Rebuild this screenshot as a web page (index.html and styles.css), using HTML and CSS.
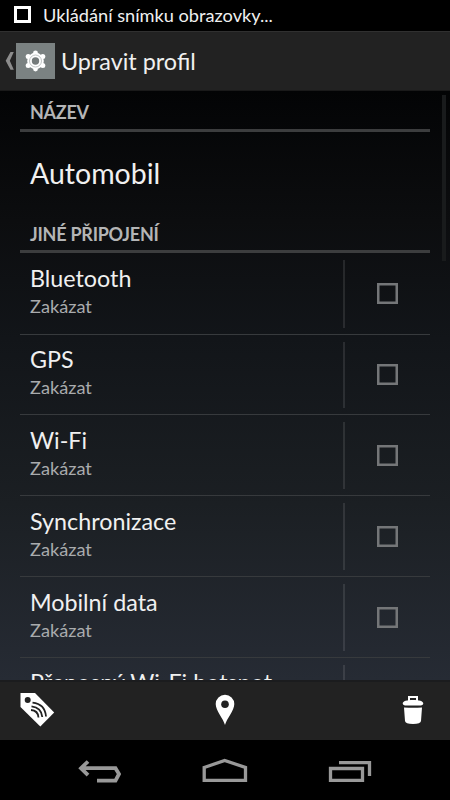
FILE: index.html
```html
<!DOCTYPE html>
<html lang="cs">
<head>
<meta charset="utf-8">
<title>Upravit profil</title>
<link rel="stylesheet" href="styles.css">
</head>
<body>
<div class="phone">
  <div class="status"><span class="status-icon"></span><span class="status-text">Ukládání snímku obrazovky...</span></div>
  <header class="action-bar">
    <svg class="back" width="9" height="20" viewBox="0 0 9 20"><path d="M5.500 1H8.800L4.800 9.800 8.800 18.800H5.500L.7 9.800z" fill="#8c8c8c"/></svg>
    <div class="app-icon">
      <svg width="39" height="36" viewBox="0 0 39 36"><g fill="#fff"><circle cx="19.500" cy="18" r="8.300"/><circle cx="19.500" cy="9.900" r="2.400"/><circle cx="19.500" cy="26.100" r="2.400"/><circle cx="12.200" cy="13.600" r="2.500"/><circle cx="26.800" cy="13.600" r="2.500"/><circle cx="12.200" cy="22.400" r="2.500"/><circle cx="26.800" cy="22.400" r="2.500"/></g><circle cx="19.500" cy="18" r="6" fill="none" stroke="#a5aaaa" stroke-width=".7"/><circle cx="19.500" cy="18" r="3.700" fill="#747a7a"/></svg>
    </div>
    <h1 class="title">Upravit profil</h1>
  </header>
  <main class="content">
    <h2 class="section">NÁZEV</h2>
    <div class="name">Automobil</div>
    <h2 class="section second">JINÉ PŘIPOJENÍ</h2>
    <div class="row"><div class="labels"><div class="label">Bluetooth</div><div class="sub">Zakázat</div></div><div class="check"><span class="box"></span></div></div>
    <div class="row"><div class="labels"><div class="label">GPS</div><div class="sub">Zakázat</div></div><div class="check"><span class="box"></span></div></div>
    <div class="row"><div class="labels"><div class="label">Wi-Fi</div><div class="sub">Zakázat</div></div><div class="check"><span class="box"></span></div></div>
    <div class="row"><div class="labels"><div class="label">Synchronizace</div><div class="sub">Zakázat</div></div><div class="check"><span class="box"></span></div></div>
    <div class="row"><div class="labels"><div class="label">Mobilní data</div><div class="sub">Zakázat</div></div><div class="check"><span class="box"></span></div></div>
    <div class="row"><div class="labels"><div class="label">Přenosný Wi-Fi hotspot</div></div><div class="check"></div></div>
    <div class="scrollbar"></div>
  </main>
  <div class="tools">
    <svg width="36" height="36" viewBox="0 0 36 36"><path d="M.5 1.500 1 1H15L34.200 20.500 20.300 34.600 .5 15z" fill="#fff"/><circle cx="7.700" cy="8" r="3" fill="#222"/><path d="M12.500 10.700Q25 12 26 24.500M11.500 14.300Q21.500 15.500 22.300 25M11 18Q18 18.500 18.500 25.500" fill="none" stroke="#222" stroke-width="1.800"/></svg>
    <svg class="pin" width="20" height="32" viewBox="0 0 20 32"><path d="M10 31C8.500 25 .7 16.500 .7 10a9.300 9.300 0 0 1 18.600 0C19.300 16.500 11.500 25 10 31z" fill="#fff"/><circle cx="10" cy="10.300" r="3.800" fill="#222"/></svg>
    <svg class="trash" width="22" height="30" viewBox="0 0 22 30"><path d="M7 6V2H15V6" fill="none" stroke="#fff" stroke-width="2"/><path d="M.7 8.500C.7 6 5 5 11 5s10.300 1 10.300 3.500Q21.300 10 19 10.500H3Q.7 10 .7 8.500zM2 12.500Q11 13 20 12.500L19 26Q18.700 29 11 29T3 26z" fill="#fff"/></svg>
  </div>
  <nav class="nav">
    <svg width="46" height="26" viewBox="0 0 46 26" fill="none" stroke="#999" stroke-width="3.800"><path d="M4 10.200H38.500L42 16 38.500 22.700H20M11 3.500 4 10.200 11 17.200"/></svg>
    <svg width="46" height="26" viewBox="0 0 46 26" fill="none" stroke="#999" stroke-width="3.300"><path d="M2.200 9.500 22.700 2.500 43.500 9.500V22.300H2.200z"/></svg>
    <svg width="46" height="26" viewBox="0 0 46 26" fill="none" stroke="#999" stroke-width="3.300"><path d="M3.500 10.500H35.500V22.300H3.500zM12 4.700H42.500V18"/></svg>
  </nav>
</div>
</body>
</html>
```
FILE: styles.css
```css
* { box-sizing: border-box; }
body { margin: 0; background: #000; }
.phone {
  width: 450px; height: 800px; overflow: hidden;
  display: flex; flex-direction: column;
  font-family: Lato, "Open Sans", sans-serif; color: #f0f0f0;
}
.phone svg { display: block; }
h1, h2 { margin: 0; }
.status { height: 31px; flex: none; display: flex; align-items: center; padding-left: 14px; background: #000; }
.status-icon { width: 17px; height: 17px; border: 3px solid #fff; margin: 0 12px 2px 0; }
.status-text { font-size: 18.200px; line-height: 31px; white-space: nowrap; }
.action-bar {
  height: 60px; flex: none; display: flex; align-items: center; padding-left: 5px;
  background: #222; border-top: 1px solid #303030; border-bottom: 1px solid #1a1a1a;
}
.app-icon { width: 39px; height: 36px; margin-left: 2px; background: #7b8282; }
.title { margin-left: 6px; font-size: 23.400px; font-weight: 400; line-height: 58px; }
.content {
  position: relative; height: 589px; flex: none; overflow: hidden; padding: 0 20px;
  background: linear-gradient(#030405, #0c0d0f 22%, #121519 42%, #1b1f23 70%, #262b34);
}
.section {
  height: 40.500px; padding: 6px 10px 0; border-bottom: 3px solid #3c3d3e;
  color: #b4b5b6; font-size: 18px; letter-spacing: -.25px; line-height: 31px; font-weight: 700;
}
.name { height: 81px; padding-left: 10px; font-size: 28.500px; line-height: 82px; }
.row { height: 80.800px; display: flex; border-bottom: 1px solid #373a3d; }
.second + .row { height: 81.600px; }
.labels { width: 323px; padding: 8.600px 0 0 10px; }
.label { font-size: 23.300px; line-height: 32px; white-space: nowrap; }
.sub { font-size: 18.200px; line-height: 24px; color: #a9abad; }
.check {
  width: 87px; margin: 7px 0 6px; padding-left: 32px; display: flex; align-items: center;
  border-left: 2px solid rgba(255, 255, 255, .1);
}
.box { width: 21px; height: 21px; border: 2px solid #747678; box-shadow: inset 0 0 0 .5px #747678; }
.scrollbar { position: absolute; right: 4px; top: 4px; width: 4px; height: 166px; background: #191b1c; }
.tools {
  height: 60px; flex: none; display: grid; grid-template-columns: 1fr 20px 1fr; align-items: center;
  padding: 0 20px 2px; background: #222; border-top: 2px solid #1b1c1e;
}
.trash { justify-self: end; margin-right: 6px; }
.nav { height: 60px; flex: none; display: flex; justify-content: space-between; padding: 18px 77px 0; background: #000; }
```
